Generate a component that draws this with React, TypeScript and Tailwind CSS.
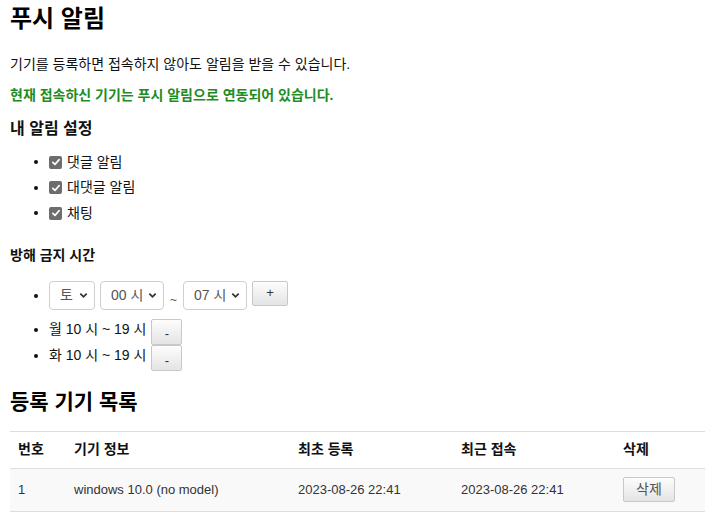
import React from 'react';

const font = { fontFamily: '"Liberation Sans", "Noto Sans CJK KR", sans-serif' };

function Check() {
  return (
    <span className="mr-[5px] inline-flex h-[13px] w-[13px] items-center justify-center rounded-[2px] bg-[#6d6d6d]">
      <svg viewBox="0 0 12 12" className="h-[10px] w-[10px]">
        <path d="M2.2 6.4 L4.8 8.8 L9.8 3.2" fill="none" stroke="white" strokeWidth="2" strokeLinecap="round" strokeLinejoin="round" />
      </svg>
    </span>
  );
}

function Select({ value, width }: { value: string; width: string }) {
  return (
    <span
      className={`inline-flex h-[29px] items-center justify-between whitespace-nowrap rounded-[4px] border border-[#cfcfcf] bg-white pl-[10px] pr-[6px] text-[14px] text-[#555] ${width}`}
    >
      <span>{value}</span>
      <svg viewBox="0 0 10 10" className="h-[9px] w-[9px]">
        <path d="M1.5 3 L5 6.5 L8.5 3" fill="none" stroke="#333" strokeWidth="2" />
      </svg>
    </span>
  );
}

function Btn({ children, className = '' }: { children: React.ReactNode; className?: string }) {
  return (
    <button
      className={`inline-flex items-center justify-center rounded-[2px] border border-[#c8c8c8] bg-gradient-to-b from-[#fdfdfd] to-[#e4e4e4] text-[13px] text-[#333] ${className}`}
    >
      {children}
    </button>
  );
}

export default function App() {
  return (
    <div className="bg-white px-[10px] text-[14px] text-[#111]" style={font}>
      <h1 className="pt-[4px] text-[24px] font-bold leading-[30px] text-black">푸시 알림</h1>
      <p className="mt-[20px] leading-[20px]">기기를 등록하면 접속하지 않아도 알림을 받을 수 있습니다.</p>
      <p className="mt-[11px] font-bold leading-[20px] text-[#1f8c1f]">
        현재 접속하신 기기는 푸시 알림으로 연동되어 있습니다.
      </p>

      <h3 className="mt-[13px] text-[16px] font-bold leading-[22px]">내 알림 설정</h3>
      <ul className="mt-[9px] list-disc pl-[39px]">
        {['댓글 알림', '대댓글 알림', '채팅'].map((t) => (
          <li key={t} className="h-[25.5px] leading-[25px]">
            <span className="inline-flex items-center align-middle">
              <Check />
              {t}
            </span>
          </li>
        ))}
      </ul>

      <h4 className="mt-[19px] font-bold leading-[20px]">방해 금지 시간</h4>
      <ul className="mt-[16px] list-disc pl-[39px]">
        <li className="h-[38px] leading-[20px]">
          <div className="inline-flex items-start gap-[5px] align-baseline">
            <Select value="토" width="w-[46px]" />
            <Select value="00 시" width="w-[64px]" />
            <span className="mx-[1px] mt-[9px] text-[12px] text-[#555]">~</span>
            <Select value="07 시" width="w-[64px]" />
            <Btn className="h-[25px] w-[36px]">+</Btn>
          </div>
        </li>
        <li className="h-[26.5px]">
          <span className="inline-flex items-start gap-[5px] align-top">
            <span className="leading-[20px]">월 10 시 ~ 19 시</span>
            <Btn className="h-[26px] w-[31px] pt-[4px] leading-none">-</Btn>
          </span>
        </li>
        <li className="h-[26.5px]">
          <span className="inline-flex items-start gap-[5px] align-top">
            <span className="leading-[20px]">화 10 시 ~ 19 시</span>
            <Btn className="h-[26px] w-[31px] pt-[4px] leading-none">-</Btn>
          </span>
        </li>
      </ul>

      <h2 className="mt-[16px] text-[21px] font-bold leading-[28px] text-black">등록 기기 목록</h2>
      <table className="mt-[15px] w-full border-collapse">
        <thead>
          <tr className="h-[37px] border-t border-[#ddd]">
            <th className="w-[56px] pl-[8px] text-left font-bold">번호</th>
            <th className="w-[224px] pl-[8px] text-left font-bold">기기 정보</th>
            <th className="w-[163px] pl-[8px] text-left font-bold">최초 등록</th>
            <th className="w-[162px] pl-[8px] text-left font-bold">최근 접속</th>
            <th className="pl-[8px] text-left font-bold">삭제</th>
          </tr>
        </thead>
        <tbody>
          <tr className="h-[43px] border-y border-[#ddd] bg-[#f9f9f9] text-[13px] text-[#333]">
            <td className="pl-[8px]">1</td>
            <td className="pl-[8px]">windows 10.0 (no model)</td>
            <td className="pl-[8px]">2023-08-26 22:41</td>
            <td className="pl-[8px]">2023-08-26 22:41</td>
            <td className="pl-[8px]">
              <Btn className="h-[25px] w-[52px] text-[14px] text-[#555]">삭제</Btn>
            </td>
          </tr>
        </tbody>
      </table>
    </div>
  );
}
